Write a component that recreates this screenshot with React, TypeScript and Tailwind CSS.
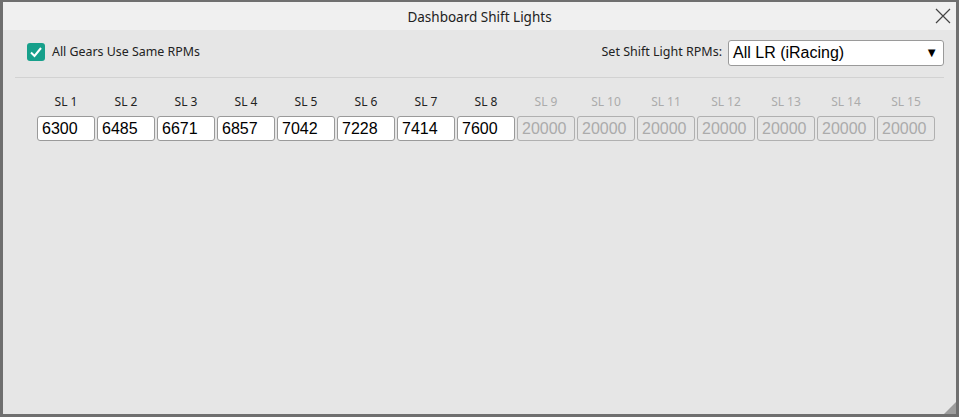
import React from "react";

const values = ["6300", "6485", "6671", "6857", "7042", "7228", "7414", "7600"];

const lights = Array.from({ length: 15 }, (_, i) => ({
  label: `SL ${i + 1}`,
  value: values[i] ?? "20000",
  enabled: i < 8,
}));

export default function App() {
  return (
    <div className="w-[959px] h-[417px] flex flex-col border-[#6f6f6f] border-t-2 border-l-[3px] border-r-[3px] border-b-[3px] bg-[#e6e6e6] font-['Noto_Sans',sans-serif] text-[#222]">
      <div className="h-[28px] shrink-0 bg-[#f0f0f0] relative flex items-center justify-center">
        <span className="text-[13.5px] pt-[2px]">Dashboard Shift Lights</span>
        <svg
          className="absolute right-[5px] top-[6px]"
          width="16"
          height="16"
          viewBox="0 0 16 16"
        >
          <path d="M1 1 L15 15 M15 1 L1 15" stroke="#444" strokeWidth="1.2" />
        </svg>
      </div>

      <div className="flex-1 flex flex-col px-[12px] relative">
        <div className="flex items-center justify-between h-[48px] pb-[2px] border-b border-[#d2d2d2] pl-[12px]">
          <div className="flex items-center gap-[7px]">
            <div className="w-[18px] h-[18px] rounded-[3px] bg-[#17a08b] flex items-center justify-center">
              <svg width="14" height="14" viewBox="0 0 14 14">
                <path
                  d="M2 7.5 L5.5 11 L12 3"
                  fill="none"
                  stroke="white"
                  strokeWidth="2"
                />
              </svg>
            </div>
            <span className="text-[12.4px]">All Gears Use Same RPMs</span>
          </div>
          <div className="flex items-center gap-[6px]">
            <span className="text-[12.5px]">Set Shift Light RPMs:</span>
            <div className="w-[216px] h-[26px] bg-white border border-[#9a9a9a] rounded-[3px] flex items-center justify-between pl-[4px] pr-[5px] font-['Liberation_Sans',sans-serif] text-[16px] text-black">
              <span>All LR (iRacing)</span>
              <span className="text-[13px]">▼</span>
            </div>
          </div>
        </div>

        <div className="flex gap-[2px] pl-[22px] pt-[16px]">
          {lights.map((l) => (
            <div key={l.label} className="flex flex-col items-center w-[58px]">
              <span
                className={`text-[12px] leading-[16px] mb-[6px] ${
                  l.enabled ? "text-[#222]" : "text-[#ababab]"
                }`}
              >
                {l.label}
              </span>
              <div
                className={`w-[58px] h-[25px] rounded-[3px] border flex items-center px-[4px] font-['Liberation_Sans',sans-serif] text-[16px] ${
                  l.enabled
                    ? "bg-white border-[#9a9a9a] text-black"
                    : "bg-[#e6e6e6] border-[#b0b0b0] text-[#ababab]"
                }`}
              >
                {l.value}
              </div>
            </div>
          ))}
        </div>

        <svg
          className="absolute right-0 bottom-0"
          width="12"
          height="12"
          viewBox="0 0 12 12"
        >
          <path d="M12 0 L12 12 L0 12 Z" fill="#9d9d9d" />
        </svg>
      </div>
    </div>
  );
}
